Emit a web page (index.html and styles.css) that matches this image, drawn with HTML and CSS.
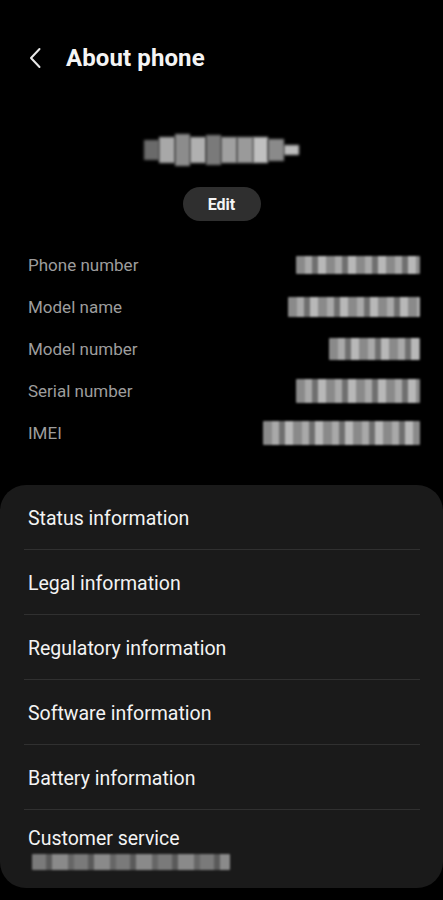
FILE: index.html
```html
<!DOCTYPE html>
<html>
<head>
<meta charset="utf-8">
<link rel="stylesheet" href="styles.css">
</head>
<body>
<div class="screen">
  <header class="topbar">
    <svg class="back" width="14" height="22" viewBox="0 0 14 22"><path d="M11.5 2 L3 11 L11.5 20" fill="none" stroke="#e8e8e8" stroke-width="2" stroke-linecap="round" stroke-linejoin="round"/></svg>
    <h1 class="title">About phone</h1>
  </header>

  <section class="profile">
    <div class="mosaic name-mosaic">
      <span class="px p1"></span><span class="px p2"></span><span class="px p3"></span><span class="px p4"></span><span class="px p5"></span><span class="px p6"></span><span class="px p7"></span><span class="px p8"></span><span class="px p9"></span><span class="px p10"></span>
    </div>
    <button class="edit">Edit</button>
  </section>

  <section class="info">
    <div class="info-row"><span class="label">Phone number</span><span class="blur b-phone"></span></div>
    <div class="info-row"><span class="label">Model name</span><span class="blur b-model"></span></div>
    <div class="info-row"><span class="label">Model number</span><span class="blur b-modelno"></span></div>
    <div class="info-row"><span class="label">Serial number</span><span class="blur b-serial"></span></div>
    <div class="info-row"><span class="label">IMEI</span><span class="blur b-imei"></span></div>
  </section>

  <section class="card">
    <div class="item">Status information</div>
    <div class="item">Legal information</div>
    <div class="item">Regulatory information</div>
    <div class="item">Software information</div>
    <div class="item">Battery information</div>
    <div class="item item-last">
      <span>Customer service</span>
      <span class="blur b-service"></span>
    </div>
  </section>
</div>
</body>
</html>
```

FILE: styles.css
```css
* { box-sizing: border-box; }
html, body { margin: 0; padding: 0; background: #000; }
body { font-family: Roboto, "Noto Sans", sans-serif; color: #f2f2f2; }
.screen { width: 443px; height: 900px; overflow: hidden; background: #000; }

.topbar { display: flex; align-items: center; height: 58px; margin-top: 29px; padding-left: 28px; gap: 24px; }
.back { display: block; }
.title { margin: 0; font-size: 24px; font-weight: 700; color: #f4f4f4; letter-spacing: 0.1px; }

.profile { display: flex; flex-direction: column; align-items: center; margin-top: 46px; }
.mosaic { display: flex; align-items: center; height: 34px; }
.name-mosaic { width: 156px; }
.px { display: block; height: 26px; flex: 1; filter: blur(1.5px); }
.p1 { background: #6a6a6a; height: 20px; }
.p2 { background: #a8a8a8; }
.p3 { background: #8c8c8c; height: 32px; }
.p4 { background: #b0b0b0; }
.p5 { background: #7a7a7a; height: 30px; }
.p6 { background: #a0a0a0; }
.p7 { background: #9a9a9a; }
.p8 { background: #c0c0c0; }
.p9 { background: #8a8a8a; height: 22px; }
.p10 { background: #bcbcbc; height: 10px; }

.edit { margin-top: 20px; width: 78px; height: 34px; border: 0; border-radius: 17px; background: #2f2f2f; color: #f5f5f5; font-family: Roboto, sans-serif; font-size: 16px; font-weight: 700; padding: 0; }

.info { display: flex; flex-direction: column; margin-top: 23px; padding: 0 23px 0 28px; }
.info-row { display: flex; align-items: center; justify-content: space-between; height: 42px; }
.label { font-size: 17px; color: #9d9d9d; }
.blur { display: block; height: 18px; border-radius: 1px; filter: blur(1px);
  background: repeating-linear-gradient(90deg, #8a8a8a 0 9px, #a9a9a9 9px 16px, #6f6f6f 16px 22px, #b8b8b8 22px 30px); }
.b-phone { width: 124px; }
.b-model { width: 132px; height: 20px; }
.b-modelno { width: 91px; height: 22px; }
.b-serial { width: 124px; height: 24px; }
.b-imei { width: 157px; height: 24px; }

.card { margin-top: 31px; background: #1a1a1a; border-radius: 26px; padding: 0 23px 0 24px; }
.item { display: flex; align-items: center; height: 65px; padding-left: 4px; padding-top: 2px; font-size: 19.5px; color: #f3f3f3; border-top: 1px solid #303030; }
.item:first-child { border-top: 0; height: 64px; }
.item-last { flex-direction: column; align-items: flex-start; justify-content: flex-start; height: 79px; padding-top: 17px; gap: 4px; }
.b-service { width: 198px; height: 16px; margin-left: 4px;
  background: repeating-linear-gradient(90deg, #7a7a7a 0 14px, #5a5a5a 14px 20px, #8a8a8a 20px 36px, #666 36px 42px); }
```
